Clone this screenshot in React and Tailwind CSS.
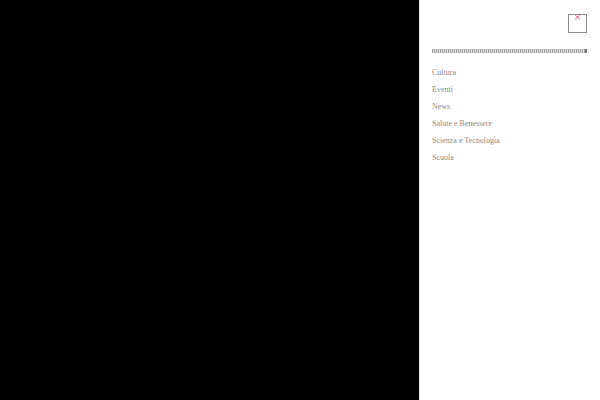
export default function App() {
  const items = ["Cultura", "Eventi", "News", "Salute e Benessere", "Scienza e Tecnologia", "Scuola"];
  return (
    <div className="flex w-[600px] h-[400px] overflow-hidden" style={{ fontFamily: '"Liberation Serif", serif' }}>
      <div className="w-[419px] h-full bg-black" />
      <div className="flex-1 h-full bg-white border-l border-[#e5e5e5] flex flex-col">
        <div className="flex justify-end pt-[14px] pr-[13px]">
          <div className="relative w-[19px] h-[19px] border border-[#8a8a8a]">
            <span className="absolute left-0 right-0 top-[-3px] text-center text-[9px] leading-[10px] text-[#e0607a]" style={{ fontFamily: '"DejaVu Sans", sans-serif' }}>×</span>
          </div>
        </div>
        <div className="mt-[16px] ml-[12px] mr-[13px] h-[4px] bg-[repeating-linear-gradient(90deg,#a0a0a0_0px,#a0a0a0_1px,#e0e0e0_1px,#e0e0e0_2px)] border-r-2 border-[#707070]" />
        <ul className="mt-[11px] ml-[12px] flex flex-col">
          {items.map((t) => (
            <li key={t} className="text-[8px] leading-[17px] text-[#8a8a8a]">{t}</li>
          ))}
        </ul>
      </div>
    </div>
  );
}
